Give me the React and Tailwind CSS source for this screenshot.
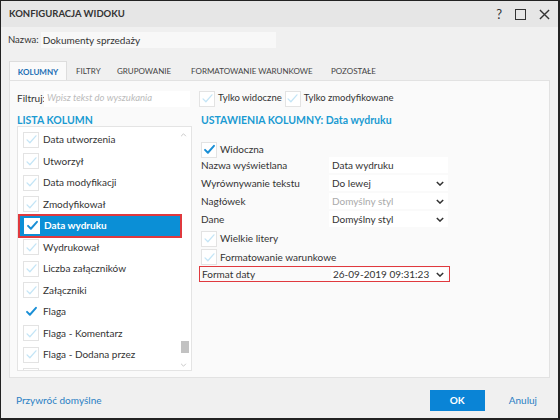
import React from "react";

const font = { fontFamily: 'Lato, "Open Sans", sans-serif' };

const Check = ({ on, white }) => (
  <span
    className={`w-[16px] h-[16px] shrink-0 flex items-center justify-center border ${
      white ? "bg-white border-white" : "bg-white border-[#e3e3e3]"
    }`}
  >
    <svg viewBox="0 0 16 16" className="w-[13px] h-[13px]">
      <path
        d="M2.5 8.5 L6 12 L13.5 3.5"
        fill="none"
        stroke={on ? "#1a8fd6" : "#c4e5f6"}
        strokeWidth={on ? 2.4 : 1.6}
        strokeLinecap="round"
        strokeLinejoin="round"
      />
    </svg>
  </span>
);

const Chevron = () => (
  <svg viewBox="0 0 10 6" className="w-[8px] h-[5px] shrink-0">
    <path d="M1 1 L5 5 L9 1" fill="none" stroke="#333" strokeWidth="1.8" />
  </svg>
);

const columns = [
  { name: "Data utworzenia" },
  { name: "Utworzył" },
  { name: "Data modyfikacji" },
  { name: "Zmodyfikował" },
  { name: "Data wydruku", selected: true, on: true },
  { name: "Wydrukował" },
  { name: "Liczba załączników" },
  { name: "Załączniki" },
  { name: "Flaga", on: true, plain: true },
  { name: "Flaga - Komentarz" },
  { name: "Flaga - Dodana przez" },
];

const tabs = [
  { name: "KOLUMNY", w: "w-[58px]" },
  { name: "FILTRY", w: "w-[41px]" },
  { name: "GRUPOWANIE", w: "w-[74px]" },
  { name: "FORMATOWANIE WARUNKOWE", w: "w-[140px]" },
  { name: "POZOSTAŁE", w: "w-[70px]" },
];

const Field = ({ label, value, select, muted }) => (
  <div className="flex items-center h-[18px]">
    <span className="w-[128px] text-[10px] text-[#333]">{label}</span>
    <div className="w-[119px] h-[16px] bg-white flex items-center justify-between pl-[3px] pr-[4px]">
      <span className={`text-[10px] ${muted ? "text-[#aaa]" : "text-[#333]"}`}>{value}</span>
      {select && <Chevron />}
    </div>
  </div>
);

export default function App() {
  return (
    <div
      style={font}
      className="w-[560px] h-[420px] bg-[#f0f0f0] border-l border-t border-[#222] border-r-2 border-b-2 flex flex-col overflow-hidden text-[#333]"
    >
      {/* Title bar */}
      <div className="h-[26px] bg-[#e6e6e6] flex items-center justify-between pl-[8px] pr-[8px] shrink-0">
        <span className="text-[9.5px] font-bold text-[#333]">KONFIGURACJA WIDOKU</span>
        <div className="flex items-center gap-[13px] text-[#333]">
          <span className="text-[13px] leading-none">?</span>
          <span className="w-[11px] h-[11px] border-[1.5px] border-[#333]" />
          <svg viewBox="0 0 12 12" className="w-[11px] h-[11px]">
            <path d="M1 1 L11 11 M11 1 L1 11" stroke="#333" strokeWidth="1.5" />
          </svg>
        </div>
      </div>

      {/* Name */}
      <div className="flex items-center pl-[7px] pt-[4px] h-[22px] shrink-0">
        <span className="text-[9.5px] mr-[2px] shrink-0 whitespace-nowrap">Nazwa:</span>
        <div className="w-[235px] h-[16px] bg-[#f8f8f8] flex items-center pl-[2px] text-[10px]">
          Dokumenty sprzedaży
        </div>
      </div>

      {/* Tabs */}
      <div className="flex items-end pl-[8px] h-[32px] shrink-0">
        {tabs.map((t, i) => (
          <div
            key={t.name}
            className={`h-[20px] flex items-center shrink-0 whitespace-nowrap text-[8px] ${t.w} ${
              i === 0
                ? "bg-[#fafafa] border-l border-t border-r border-[#ddd] justify-center font-bold text-[#1a6fb5]"
                : "pl-[9px] text-[#444]"
            }`}
          >
            {t.name}
          </div>
        ))}
      </div>

      {/* Panel */}
      <div className="mx-[8px] h-[298px] shrink-0 bg-[#fafafa] border border-[#e2e2e2] -mt-px pl-[7px] pt-[9px] flex flex-col">
        <div className="flex items-center h-[17px]">
          <span className="text-[10px] w-[27px] shrink-0 whitespace-nowrap">Filtruj:</span>
          <div className="w-[146px] h-[16px] bg-white flex items-center pl-[3px] text-[9.5px] italic text-[#bbb]">
            Wpisz tekst do wyszukania
          </div>
          <div className="ml-[9px] mr-[3px] flex items-center gap-[3px] shrink-0 whitespace-nowrap">
            <Check />
            <span className="text-[9.5px]">Tylko widoczne</span>
          </div>
          <div className="flex items-center gap-[3px] whitespace-nowrap">
            <Check />
            <span className="text-[9.5px]">Tylko zmodyfikowane</span>
          </div>
        </div>

        <div className="flex mt-[5px] flex-1">
          {/* Left list */}
          <div className="w-[175px] flex flex-col">
            <div className="text-[10.5px] font-bold text-[#1b9ad2] h-[13px] leading-[17px] whitespace-nowrap">LISTA KOLUMN</div>
            <div className="relative mt-[1px] h-[245px] bg-white border border-[#e4e4e4] overflow-hidden pt-[2px]">
              {columns.map((c) => (
                <div
                  key={c.name}
                  className={`h-[21.5px] flex items-center gap-[4px] pl-[5px] ${
                    c.selected
                      ? "bg-[#0b8fd6] outline-2 outline-[#e0393e] -outline-offset-1 mx-[1px] pl-[4px] w-[162px]"
                      : ""
                  }`}
                >
                  {c.plain ? (
                    <span className="w-[16px] h-[16px] flex items-center justify-center">
                      <svg viewBox="0 0 16 16" className="w-[13px] h-[13px]">
                        <path d="M2.5 8.5 L6 12 L13.5 3.5" fill="none" stroke="#1a8fd6" strokeWidth="2.4" strokeLinecap="round" strokeLinejoin="round" />
                      </svg>
                    </span>
                  ) : (
                    <Check on={c.on} white={c.selected} />
                  )}
                  <span className={`text-[10px] ${c.selected ? "text-white font-bold" : "text-[#333]"}`}>{c.name}</span>
                </div>
              ))}
              <div className="h-[21px] flex items-center pl-[5px]">
                <Check />
              </div>
              {/* scrollbar */}
              <svg viewBox="0 0 8 5" className="absolute right-[4px] top-[6px] w-[7px] h-[4px]">
                <path d="M1 4 L4 1 L7 4" fill="none" stroke="#bbb" strokeWidth="1" />
              </svg>
              <div className="absolute right-[2px] top-[214px] w-[8px] h-[12px] bg-[#c2c2c2]" />
              <svg viewBox="0 0 8 5" className="absolute right-[4px] top-[236px] w-[7px] h-[4px]">
                <path d="M1 1 L4 4 L7 1" fill="none" stroke="#bbb" strokeWidth="1" />
              </svg>
            </div>
          </div>

          {/* Right settings */}
          <div className="ml-[9px] pt-[2px] flex flex-col">
            <div className="text-[10.5px] font-bold text-[#1b9ad2] h-[13px] leading-[13px] whitespace-nowrap">
              USTAWIENIA KOLUMNY: Data wydruku
            </div>
            <div className="flex items-center gap-[3px] mt-[14px] h-[17px]">
              <Check on />
              <span className="text-[10px]">Widoczna</span>
            </div>
            <div className="flex flex-col -mt-[2px]">
              <Field label="Nazwa wyświetlana" value="Data wydruku" />
              <Field label="Wyrównywanie tekstu" value="Do lewej" select />
              <Field label="Nagłówek" value="Domyślny styl" select muted />
              <Field label="Dane" value="Domyślny styl" select />
            </div>
            <div className="flex items-center gap-[3px] mt-[1px] h-[19px]">
              <Check />
              <span className="text-[10px]">Wielkie litery</span>
            </div>
            <div className="flex items-center gap-[3px] h-[18px]">
              <Check />
              <span className="text-[10px]">Formatowanie warunkowe</span>
            </div>
            <div className="flex items-center h-[16px] -ml-[2px] w-[251px] border-[1.5px] border-[#e0393e] pl-[2px]">
              <span className="w-[129px] text-[10px] text-[#333]">Format daty</span>
              <div className="w-[116px] h-[13px] bg-white flex items-center justify-between pl-[2px] pr-[3px]">
                <span className="text-[10px] text-[#333]">26-09-2019 09:31:23</span>
                <Chevron />
              </div>
            </div>
          </div>
        </div>
      </div>

      {/* Footer */}
      <div className="flex-1 flex items-center justify-between pt-[4px] pl-[15px] pr-[21px]">
        <span className="text-[10px] text-[#2a7fc4]">Przywróć domyślne</span>
        <div className="flex items-center gap-[24px]">
          <div className="w-[55px] h-[21px] bg-[#0a84d6] flex items-center justify-center text-white text-[10px] font-bold">
            OK
          </div>
          <span className="text-[10px] text-[#2a7fc4]">Anuluj</span>
        </div>
      </div>
    </div>
  );
}
